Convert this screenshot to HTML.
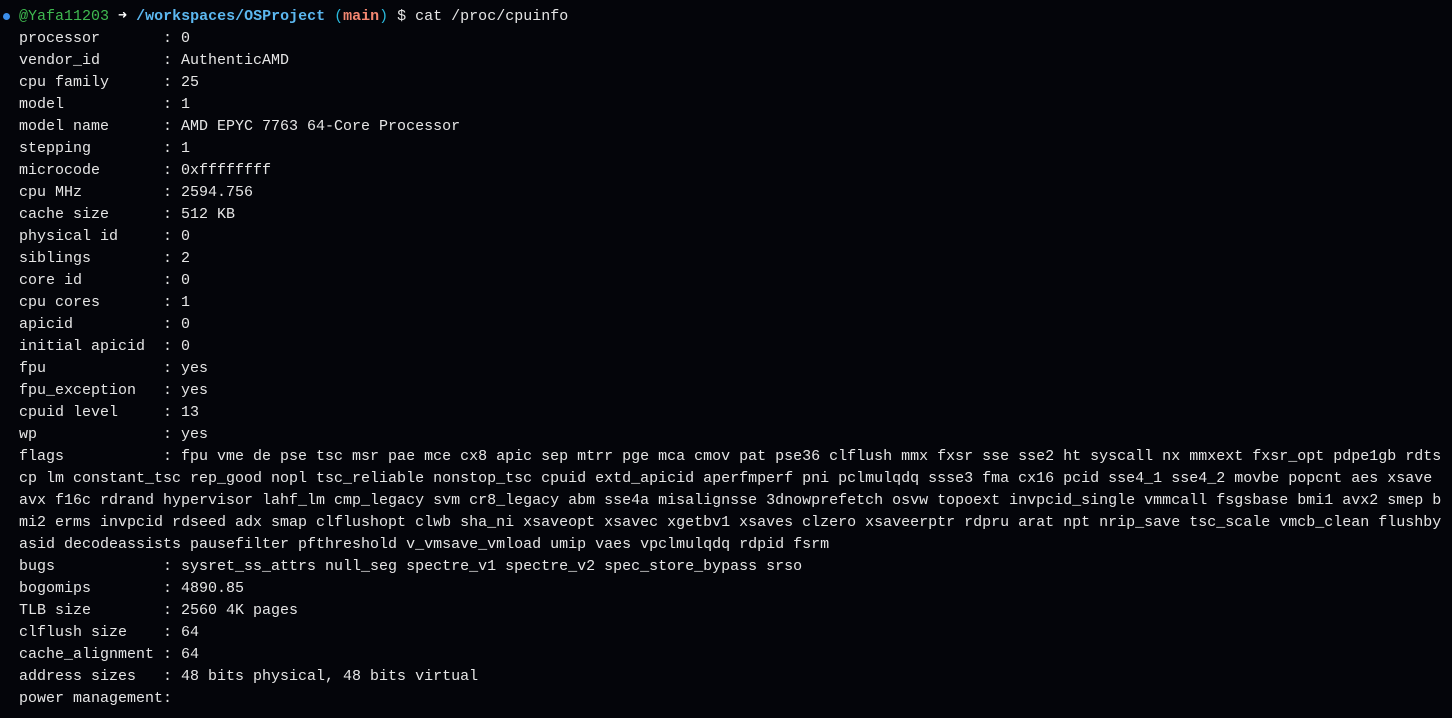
<!DOCTYPE html>
<html><head><meta charset="utf-8"><style>
html,body{margin:0;padding:0;background:#04050a;width:1452px;height:718px;overflow:hidden}
pre{margin:0;position:absolute;left:19px;top:6px;font-family:"Liberation Mono",monospace;font-size:15px;line-height:22px;color:#e6e6e6;white-space:pre}
.g{color:#3fb950}.b{color:#5cb8f0;font-weight:bold}.w{font-weight:bold;color:#fff}.c{color:#29b8db}.r{color:#f48771;font-weight:bold}
.dot{position:absolute;left:3px;top:13px;width:7px;height:7px;border-radius:50%;background:#3b8eea}
</style></head><body>
<div class="dot"></div>
<pre><span class="g">@Yafa11203</span> <span class="w">➜</span> <span class="b">/workspaces/OSProject</span> <span class="c">(</span><span class="r">main</span><span class="c">)</span> $ cat /proc/cpuinfo
processor       : 0
vendor_id       : AuthenticAMD
cpu family      : 25
model           : 1
model name      : AMD EPYC 7763 64-Core Processor
stepping        : 1
microcode       : 0xffffffff
cpu MHz         : 2594.756
cache size      : 512 KB
physical id     : 0
siblings        : 2
core id         : 0
cpu cores       : 1
apicid          : 0
initial apicid  : 0
fpu             : yes
fpu_exception   : yes
cpuid level     : 13
wp              : yes
flags           : fpu vme de pse tsc msr pae mce cx8 apic sep mtrr pge mca cmov pat pse36 clflush mmx fxsr sse sse2 ht syscall nx mmxext fxsr_opt pdpe1gb rdts
cp lm constant_tsc rep_good nopl tsc_reliable nonstop_tsc cpuid extd_apicid aperfmperf pni pclmulqdq ssse3 fma cx16 pcid sse4_1 sse4_2 movbe popcnt aes xsave
avx f16c rdrand hypervisor lahf_lm cmp_legacy svm cr8_legacy abm sse4a misalignsse 3dnowprefetch osvw topoext invpcid_single vmmcall fsgsbase bmi1 avx2 smep b
mi2 erms invpcid rdseed adx smap clflushopt clwb sha_ni xsaveopt xsavec xgetbv1 xsaves clzero xsaveerptr rdpru arat npt nrip_save tsc_scale vmcb_clean flushby
asid decodeassists pausefilter pfthreshold v_vmsave_vmload umip vaes vpclmulqdq rdpid fsrm
bugs            : sysret_ss_attrs null_seg spectre_v1 spectre_v2 spec_store_bypass srso
bogomips        : 4890.85
TLB size        : 2560 4K pages
clflush size    : 64
cache_alignment : 64
address sizes   : 48 bits physical, 48 bits virtual
power management:
</pre>
</body></html>
